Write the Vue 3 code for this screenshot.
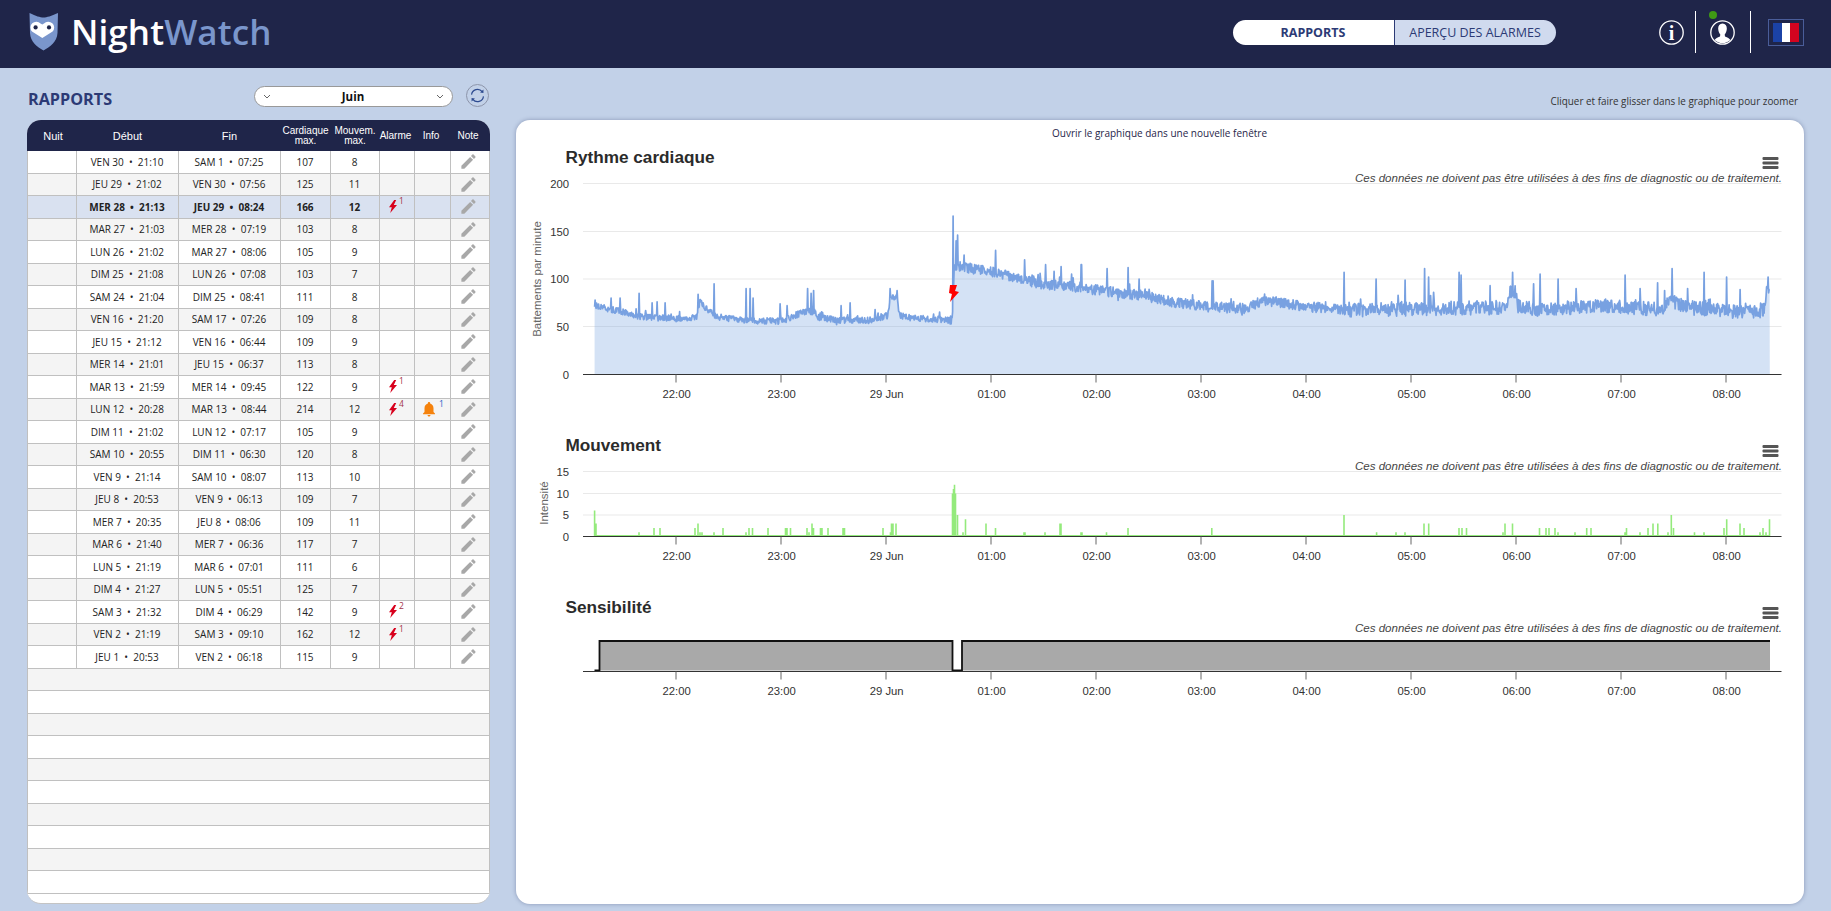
<template>
  <div class="page">
    <header class="topbar">
      <div class="logo">
        <svg class="owl" viewBox="0 0 30 38" width="30" height="38">
          <path d="M0.5 0C7 3 11 4.5 14.5 4.5S22 3 29 0L28.5 20C28 29 21 34 14.5 37.5C8 34 1.5 29 1 20Z" fill="#7a96cc" />
          <path d="M13.3 25L3 18.5A5.8 5.8 0 1 1 11.5 10.5L13.3 11.5L15 10.5A5.8 5.8 0 1 1 23.6 18.5Z" fill="#fff" />
          <circle cx="6.6" cy="14.4" r="2.1" fill="#1f2549" />
          <circle cx="20" cy="14.4" r="2.1" fill="#1f2549" />
        </svg>
        <span class="logo-text">Night<span class="logo-accent">Watch</span></span>
      </div>

      <div class="tabs">
        <button class="tab tab-active">RAPPORTS</button>
        <button class="tab">APERÇU DES ALARMES</button>
      </div>

      <svg class="info-icon" viewBox="0 0 25 25" width="25" height="25">
        <circle cx="12.5" cy="12.5" r="11.7" fill="none" stroke="#fff" stroke-width="1.3" />
        <text x="12.5" y="19.5" text-anchor="middle" class="info-letter">i</text>
      </svg>
      <span class="bar-divider"></span>
      <div class="user">
        <svg viewBox="0 0 25 25" width="25" height="25">
          <circle cx="12.5" cy="12.5" r="11.7" fill="none" stroke="#fff" stroke-width="1.3" />
          <path d="M12.5 3.5C9.4 3.5 8 6 8.2 9C8.4 11.5 9.3 13.5 10.3 14.6L10 16.5C7.5 17.7 5.5 18.3 4.6 20A11.5 11.5 0 0 0 20.4 20C19.5 18.3 17.5 17.7 15 16.5L14.7 14.6C15.7 13.5 16.6 11.5 16.8 9C17 6 15.6 3.5 12.5 3.5Z" fill="#fff" />
        </svg>
        <span class="status-dot"></span>
      </div>
      <span class="bar-divider"></span>
      <div class="flag-box">
        <span class="flag-blue"></span><span class="flag-white"></span><span class="flag-red"></span>
      </div>
    </header>

    <main class="content">
      <section class="reports">
        <div class="reports-head">
          <h2>RAPPORTS</h2>
          <div class="month-select">
            <svg class="chevron" viewBox="0 0 8 5" width="8" height="5"><path d="M1 1l3 3 3-3" /></svg>
            <span>Juin</span>
            <svg class="chevron" viewBox="0 0 8 5" width="8" height="5"><path d="M1 1l3 3 3-3" /></svg>
          </div>
          <button class="refresh">
            <svg viewBox="0 0 20 20" width="17" height="17">
              <path d="M3 9A7 7 0 0 1 15.5 5.5" />
              <path d="M17 11A7 7 0 0 1 4.5 14.5" />
              <path class="arrow" d="M13 6.5L17 7L17 2.8Z" />
              <path class="arrow" d="M7 13.5L3 13L3 17.2Z" />
            </svg>
          </button>
        </div>

        <div class="table">
          <div class="table-row table-head">
            <div class="big">Nuit</div>
            <div class="big">Début</div>
            <div class="big">Fin</div>
            <div>Cardiaque<br />max.</div>
            <div>Mouvem.<br />max.</div>
            <div class="nudge">Alarme</div>
            <div class="nudge">Info</div>
            <div>Note</div>
          </div>
          <div
            v-for="(row, i) in rows"
            :key="row.start"
            class="table-row"
            :class="{ odd: i % 2 === 1, selected: row.selected }"
          >
            <div></div>
            <div>{{ row.start }}</div>
            <div>{{ row.end }}</div>
            <div>{{ row.heart }}</div>
            <div>{{ row.move }}</div>
            <div>
              <template v-if="row.alarm">
                <svg class="bolt" viewBox="0 0 10 16" width="8" height="13">
                  <polygon points="6.5,0 0,9 3.5,9 1.5,16 10,6 6,6 9,0" />
                </svg>
                <sup class="sup-red">{{ row.alarm }}</sup>
              </template>
            </div>
            <div>
              <template v-if="row.info">
                <svg class="bell" viewBox="0 0 24 24" width="18" height="18">
                  <path d="M12 22c1.1 0 2-.9 2-2h-4c0 1.1.9 2 2 2zm6-6v-5c0-3.07-1.63-5.64-4.5-6.32V4c0-.83-.67-1.5-1.5-1.5s-1.5.67-1.5 1.5v.68C7.63 5.36 6 7.92 6 11v5l-2 2v1h16v-1l-2-2z" />
                </svg>
                <sup class="sup-blue">{{ row.info }}</sup>
              </template>
            </div>
            <div>
              <svg class="pencil" viewBox="0 0 24 24" width="19" height="19">
                <path d="M3 17.25V21h3.75L17.81 9.94l-3.75-3.75L3 17.25zM20.71 7.04c.39-.39.39-1.02 0-1.41l-2.34-2.34c-.39-.39-1.02-.39-1.41 0l-1.83 1.83 3.75 3.75 1.83-1.83z" />
              </svg>
            </div>
          </div>
          <div v-for="n in 10" :key="n" class="table-row empty" :class="{ odd: n % 2 === 1 }"></div>
        </div>
      </section>

      <section class="graphs">
        <p class="hint">Cliquer et faire glisser dans le graphique pour zoomer</p>
        <div class="panel">
          <a class="open-link">Ouvrir le graphique dans une nouvelle fenêtre</a>

          <svg
            v-for="chart in charts"
            :key="chart.title"
            class="chart"
            :class="chart.id"
            width="1286"
            :height="chart.height"
          >
            <text x="49.5" y="18" class="chart-title">{{ chart.title }}</text>
            <g class="burger">
              <rect x="1246.5" y="12" width="16" height="3" rx="1" />
              <rect x="1246.5" y="16.5" width="16" height="3" rx="1" />
              <rect x="1246.5" y="21" width="16" height="3" rx="1" />
            </g>

            <line v-for="g in chart.grid" :key="g.label" x1="67" x2="1265.5" :y1="g.y" :y2="g.y" class="grid" />
            <text v-for="g in chart.grid" :key="g.label" x="53" :y="g.y + 4" text-anchor="end" class="tick-label">{{ g.label }}</text>
            <text
              v-if="chart.yTitle"
              :x="chart.yTitle.x"
              :y="chart.yTitle.y"
              :transform="`rotate(-90 ${chart.yTitle.x} ${chart.yTitle.y})`"
              text-anchor="middle"
              class="y-title"
            >{{ chart.yTitle.text }}</text>

            <template v-if="chart.id === 'heart'">
              <path :d="heartArea" class="heart-area" />
              <path :d="heartLine" class="heart-line" />
              <polygon points="434,140 441,140 439,146 443,147 434,157 436,149 433,148" class="chart-bolt" />
            </template>
            <template v-else-if="chart.id === 'move'">
              <path :d="moveBars" class="move-bars" />
              <line x1="78.5" x2="1254" :y1="chart.axis - 0.8" :y2="chart.axis - 0.8" class="move-base" />
            </template>
            <template v-else>
              <path d="M83.5 46H436.5V75.5H83.5ZM446 46H1254V75.5H446Z" class="sens-fill" />
              <path d="M78.5 75.5H83.5V46H436.5V75.5H446V46H1254" class="sens-line" />
            </template>

            <text x="1266" y="37" text-anchor="end" class="disclaimer">Ces données ne doivent pas être utilisées à des fins de diagnostic ou de traitement.</text>

            <line x1="67" x2="1265.5" :y1="chart.axis" :y2="chart.axis" class="axis" />
            <g v-for="t in ticks" :key="t.label">
              <line :x1="t.x" :x2="t.x" :y1="chart.axis" :y2="chart.axis + 8" class="tick" />
              <text :x="t.x + 0.7" :y="chart.axis + 23.5" text-anchor="middle" class="tick-label">{{ t.label }}</text>
            </g>
          </svg>
        </div>
      </section>
    </main>
  </div>
</template>

<script setup>
import { computed } from 'vue'

const night = (day, time) => `${day} \u00a0•\u00a0 ${time}`

const rows = [
  ['VEN 30', '21:10', 'SAM 1', '07:25', 107, 8],
  ['JEU 29', '21:02', 'VEN 30', '07:56', 125, 11],
  ['MER 28', '21:13', 'JEU 29', '08:24', 166, 12, 1, 0, true],
  ['MAR 27', '21:03', 'MER 28', '07:19', 103, 8],
  ['LUN 26', '21:02', 'MAR 27', '08:06', 105, 9],
  ['DIM 25', '21:08', 'LUN 26', '07:08', 103, 7],
  ['SAM 24', '21:04', 'DIM 25', '08:41', 111, 8],
  ['VEN 16', '21:20', 'SAM 17', '07:26', 109, 8],
  ['JEU 15', '21:12', 'VEN 16', '06:44', 109, 9],
  ['MER 14', '21:01', 'JEU 15', '06:37', 113, 8],
  ['MAR 13', '21:59', 'MER 14', '09:45', 122, 9, 1],
  ['LUN 12', '20:28', 'MAR 13', '08:44', 214, 12, 4, 1],
  ['DIM 11', '21:02', 'LUN 12', '07:17', 105, 9],
  ['SAM 10', '20:55', 'DIM 11', '06:30', 120, 8],
  ['VEN 9', '21:14', 'SAM 10', '08:07', 113, 10],
  ['JEU 8', '20:53', 'VEN 9', '06:13', 109, 7],
  ['MER 7', '20:35', 'JEU 8', '08:06', 109, 11],
  ['MAR 6', '21:40', 'MER 7', '06:36', 117, 7],
  ['LUN 5', '21:19', 'MAR 6', '07:01', 111, 6],
  ['DIM 4', '21:27', 'LUN 5', '05:51', 125, 7],
  ['SAM 3', '21:32', 'DIM 4', '06:29', 142, 9, 2],
  ['VEN 2', '21:19', 'SAM 3', '09:10', 162, 12, 1],
  ['JEU 1', '20:53', 'VEN 2', '06:18', 115, 9]
].map(r => ({
  start: night(r[0], r[1]),
  end: night(r[2], r[3]),
  heart: r[4],
  move: r[5],
  alarm: r[6],
  info: r[7],
  selected: r[8]
}))

// x positions are page px minus the panel's left edge (516)
const ticks = ['22:00', '23:00', '29 Jun', '01:00', '02:00', '03:00', '04:00', '05:00', '06:00', '07:00', '08:00']
  .map((label, i) => ({ label, x: 160 + i * 105 }))

const charts = [
  {
    id: 'heart',
    title: 'Rythme cardiaque',
    height: 265,
    axis: 229.5,
    grid: [
      { label: '200', y: 38.5 },
      { label: '150', y: 86.5 },
      { label: '100', y: 134 },
      { label: '50', y: 181.5 },
      { label: '0', y: 229.5 }
    ],
    yTitle: { x: 25, y: 134, text: 'Battements par minute' }
  },
  {
    id: 'move',
    title: 'Mouvement',
    height: 135,
    axis: 103.5,
    grid: [
      { label: '15', y: 38.5 },
      { label: '10', y: 60.5 },
      { label: '5', y: 82 },
      { label: '0', y: 103.5 }
    ],
    yTitle: { x: 31.5, y: 70, text: 'Intensité' }
  },
  { id: 'sens', title: 'Sensibilité', height: 110, axis: 76.5, grid: [] }
]

const mulberry = seed => () => {
  seed = (seed + 0x6d2b79f5) | 0
  let t = Math.imul(seed ^ (seed >>> 15), 1 | seed)
  t = (t + Math.imul(t ^ (t >>> 7), 61 | t)) ^ t
  return ((t ^ (t >>> 14)) >>> 0) / 4294967296
}

// [page x, bpm] baseline of the night
const heartBase = [
  [595, 72], [620, 66], [640, 61], [660, 59], [690, 58], [697, 61], [700, 76], [705, 70], [712, 64], [718, 60],
  [745, 57], [770, 56], [782, 56], [795, 62], [805, 66], [815, 66], [818, 60], [840, 57], [870, 57], [888, 62],
  [890, 80], [897, 80], [899, 63], [905, 60], [950, 57], [952.5, 57], [954, 112], [960, 113], [990, 107.5],
  [1006, 104], [1040, 95], [1073, 92], [1107, 87], [1140, 83], [1173, 76], [1207, 71], [1247, 69], [1263, 78],
  [1307, 71], [1357, 67], [1420, 69], [1500, 70], [1506, 72], [1509, 86], [1515, 86], [1518, 72], [1540, 68],
  [1600, 72], [1660, 68], [1672, 76], [1690, 70], [1730, 66], [1763, 66], [1767, 90], [1770, 88]
]

const heartSpikes = [
  [595, 78], [611, 80], [620, 80], [639, 85], [652, 75], [657, 76], [665, 75], [698, 84], [714, 95], [746, 90], [750, 90], [753, 80],
  [780, 74], [787, 72], [807.5, 90], [811, 85], [813.6, 88], [841, 72], [850, 75], [875, 68], [890, 90], [897, 88],
  [953, 166], [956, 140], [957.5, 146], [964, 125], [995.7, 130], [1024.7, 120], [1045.7, 115], [1054, 108],
  [1061, 113], [1071.7, 105], [1081.3, 115], [1107, 111], [1128, 112], [1139, 100], [1212, 98], [1213, 98], [1344, 107],
  [1376, 100], [1405, 99], [1424.6, 111], [1428.5, 102], [1459, 107], [1461, 104], [1490, 93], [1512.6, 107],
  [1533.7, 95], [1540, 105], [1558, 100], [1576, 90], [1625, 104], [1640, 90], [1657.5, 96], [1672, 111],
  [1687.5, 90], [1704, 107], [1726.5, 102], [1740, 89], [1768, 102]
]

const baseAt = x => {
  for (let i = 1; i < heartBase.length; i++) {
    if (x <= heartBase[i][0]) {
      const [x0, v0] = heartBase[i - 1]
      const [x1, v1] = heartBase[i]
      return v0 + ((v1 - v0) * (x - x0)) / (x1 - x0)
    }
  }
  return heartBase[heartBase.length - 1][1]
}

const heartPoints = computed(() => {
  const rand = mulberry(2906)
  const pts = []
  for (let x = 594.6; x <= 1769.8; x += 0.5) {
    const amp = x < 950 ? 3.4 : x < 1350 ? 5.4 : 7.4
    let v = baseAt(x) + (rand() - 0.5) * 2 * amp
    if (rand() < 0.05) v += (rand() - 0.3) * amp * 2.4
    for (const [sx, top] of heartSpikes) {
      if (Math.abs(x - sx) < 0.3) v = top
    }
    pts.push([x - 516, 229.5 - v * 0.955])
  }
  return pts
})

const heartLine = computed(() => 'M' + heartPoints.value.map(p => `${p[0].toFixed(1)} ${p[1].toFixed(1)}`).join('L'))
const heartArea = computed(() => `${heartLine.value}L1253.8 229.5L78.6 229.5Z`)

// [page x, intensity]
const moveData = [
  [594.6, 6], [596, 3], [639, 1], [654, 2], [660, 2], [695, 2], [698, 3], [700, 1], [702, 1], [714, 1], [723, 2],
  [746, 1], [749, 2], [752.5, 2], [768, 2], [785.5, 2], [787, 2], [790.5, 2], [807, 2], [809, 1], [812, 3], [813.5, 2],
  [820.5, 2], [822, 2], [828, 2], [843, 2], [844.5, 2], [883, 2], [890.5, 1], [891.5, 3], [893, 3], [896, 3], [952.5, 10],
  [953.5, 11], [954.5, 12], [955.5, 10], [957.5, 5], [963, 1], [965.5, 4], [986, 3], [995.5, 2], [1024, 1], [1025, 1],
  [1045, 1], [1061, 3],
  [1060, 3], [1081, 1], [1082, 1], [1106.5, 1], [1128, 2], [1211.8, 2], [1344, 5], [1376.6, 1], [1396, 1], [1405, 1],
  [1424, 3], [1428.7, 3], [1459, 2], [1462, 2], [1466.5, 2], [1503, 1], [1505, 3], [1512.5, 3], [1539.5, 2], [1546, 2],
  [1549, 2], [1555, 2], [1558, 1], [1575, 1], [1586.7, 2], [1591, 2], [1625, 1], [1626.5, 2], [1640, 1], [1648, 2],
  [1653, 3], [1657.8, 3], [1668, 1], [1671.3, 5], [1673.5, 2], [1694.5, 1], [1704, 1], [1724, 2], [1726.7, 4],
  [1740, 3], [1744, 2], [1760, 1], [1763, 2], [1766, 1], [1769.5, 4]
]

const moveBars = computed(() =>
  moveData
    .map(([x, v]) => `M${(x - 516 - 0.8).toFixed(1)} 103.5v${(-v * 4.31).toFixed(1)}h1.6v${(v * 4.31).toFixed(1)}z`)
    .join('')
)
</script>

<style>
html,
body {
  margin: 0;
  overflow: hidden;
}
</style>

<style scoped>
.page {
  height: 911px;
  display: flex;
  flex-direction: column;
  background: #c2d1e8;
  font-family: "Open Sans", "Liberation Sans", sans-serif;
  overflow: hidden;
}

.topbar {
  flex: none;
  height: 68px;
  display: flex;
  align-items: center;
  padding: 0 27px 4px 29px;
  box-sizing: border-box;
  background: #1f2549;
  color: #fff;
}

.logo {
  display: flex;
  align-items: center;
  gap: 12px;
}

.logo-text {
  font-family: "Open Sans", sans-serif;
  font-size: 35px;
  font-weight: 600;
  letter-spacing: 0.1px;
  line-height: 40px;
}

.logo-accent {
  color: #7a96cc;
}

.tabs {
  display: flex;
  margin-left: auto;
  height: 25px;
}

.tab {
  width: 162px;
  border: 0;
  border-radius: 0 13px 13px 0;
  background: #d0daee;
  color: #2c3a75;
  font: 400 12.5px "Open Sans", sans-serif;
  padding: 0;
  border-left: 1px solid #2c3a75;
}

.tab-active {
  width: 161px;
  background: #fff;
  border-left: 0;
  border-radius: 13px 0 0 13px;
  font-weight: 700;
}

.info-icon {
  margin-left: 103px;
}

.info-letter {
  font: 700 20px "Liberation Serif", serif;
  fill: #fff;
}

.bar-divider {
  width: 1px;
  height: 42px;
  margin: 0 14px 0 11px;
  background: #fff;
}

.user {
  position: relative;
  display: flex;
  margin-right: 4px;
}

.status-dot {
  position: absolute;
  left: -1px;
  top: -9px;
  width: 8px;
  height: 8px;
  border-radius: 50%;
  background: #3f9a14;
}

.flag-box {
  width: 36px;
  height: 27px;
  margin-left: 3.5px;
  box-sizing: border-box;
  display: flex;
  padding: 3px 4px;
  border: 1px solid #4a5d99;
}

.flag-box span {
  flex: 1;
}

.flag-blue {
  background: #1b42a6;
}

.flag-white {
  background: #fff;
}

.flag-red {
  background: #d3041f;
}

.content {
  flex: 1;
  min-height: 0;
  display: flex;
  padding: 0 27px 7px 27px;
  gap: 26.5px;
}

.reports {
  width: 462.5px;
  flex: none;
  display: flex;
  flex-direction: column;
}

.reports-head {
  height: 52px;
  flex: none;
  display: flex;
  align-items: center;
  padding-top: 4px;
  box-sizing: border-box;
}

.reports-head h2 {
  margin: 6px 0 0 1px;
  color: #2c3a75;
  font-size: 16.2px;
  font-weight: 700;
}

.month-select {
  margin-left: auto;
  width: 199px;
  height: 21px;
  box-sizing: border-box;
  display: flex;
  align-items: center;
  justify-content: space-between;
  padding: 0 8px;
  background: #fff;
  border: 1px solid #999;
  border-radius: 11px;
  font-size: 11.5px;
  font-weight: 700;
  color: #111;
}

.chevron {
  fill: none;
  stroke: #666;
  stroke-width: 1;
}

.refresh {
  width: 23px;
  height: 23px;
  margin: -1px 1px 0 13px;
  padding: 0;
  display: flex;
  align-items: center;
  justify-content: center;
  border: 1px solid #8d95aa;
  border-radius: 50%;
  background: transparent;
}

.refresh path {
  fill: none;
  stroke: #2c4a8f;
  stroke-width: 1.4;
}

.refresh path.arrow {
  fill: #2c4a8f;
  stroke: none;
}

.table {
  flex: 1;
  min-height: 0;
  overflow: hidden;
  background: #fff;
  border-radius: 14px;
  border-bottom: 1px solid #c4c4c4;
  box-sizing: border-box;
}

.table-row {
  display: grid;
  grid-template-columns: 49px 102px 102px 50px 49px 35px 36px 39px;
  height: 22.5px;
  box-sizing: border-box;
  background: #fff;
  border-bottom: 1px solid #c0c0c0;
  border-left: 1px solid #c0c0c0;
  border-right: 1px solid #c0c0c0;
  color: #222;
  font-size: 10px;
}

.table-row.odd {
  background: #f4f4f4;
}

.table-row.selected {
  background: #d9e1f0;
  font-weight: 700;
}

.table-row > div {
  display: flex;
  align-items: center;
  justify-content: center;
  border-right: 1px solid #c0c0c0;
  margin-left: -1px;
  white-space: nowrap;
}

.table-row > div:last-child {
  border-right: 0;
  padding-right: 4px;
}

.table-head {
  height: 31px;
  padding-left: 1px;
  background: #1f2549;
  border: 0;
  color: #fff;
  font: 10px/10px "Liberation Sans", sans-serif;
  text-align: center;
}

.table-head > div {
  border: 0;
}

.table-head > div:first-child {
  padding-left: 2px;
}

.table-head .nudge {
  padding-right: 3px;
}

.table-head .big {
  font-size: 11px;
}

.bolt {
  fill: #d8001c;
}

.bell {
  fill: #f5820d;
  margin-right: -1px;
}

.pencil {
  fill: #a8a8a8;
}

.table-row sup {
  font-size: 8.5px;
  font-weight: 400;
  line-height: 1;
  margin: -11px 0 0 2px;
}

.sup-red {
  color: #a33347;
}

.sup-blue {
  color: #2a62c8;
}

.graphs {
  flex: 1;
  min-width: 0;
  display: flex;
  flex-direction: column;
}

.hint {
  height: 52px;
  flex: none;
  margin: 0;
  padding: 26px 6px 0 0;
  box-sizing: border-box;
  text-align: right;
  color: #333;
  font-size: 9.9px;
  line-height: 14px;
}

.panel {
  flex: 1;
  min-height: 0;
  padding-top: 6px;
  background: #fff;
  border-radius: 14px;
  box-shadow: 0 0 4px rgba(30, 40, 90, 0.35);
}

.open-link {
  display: block;
  height: 14px;
  margin-bottom: 5px;
  padding-right: 1px;
  text-align: center;
  color: #1f2549;
  font-size: 10px;
  line-height: 14px;
}

.chart {
  display: block;
  font-family: "Liberation Sans", sans-serif;
}

.chart.heart {
  margin-bottom: 23px;
}

.chart.move {
  margin-bottom: 27px;
}

.chart-title {
  font-size: 17.2px;
  font-weight: 700;
  fill: #2b2b2b;
}

.burger rect {
  fill: #555;
}

.grid {
  stroke: #e9e9e9;
  stroke-width: 1.2;
}

.tick-label {
  font-size: 11.3px;
  fill: #333;
}

.y-title {
  font-size: 11.5px;
  fill: #666;
}

.heart-area {
  fill: rgba(120, 165, 225, 0.32);
}

.heart-line {
  fill: none;
  stroke: #78a1e1;
  stroke-width: 1.7;
  stroke-linejoin: round;
}

.chart-bolt {
  fill: #f00;
}

.move-bars {
  fill: #94ea7c;
}

.move-base {
  stroke: #94ea7c;
  stroke-width: 1.5;
}

.sens-fill {
  fill: #a9a9a9;
}

.sens-line {
  fill: none;
  stroke: #111;
  stroke-width: 1.8;
}

.disclaimer {
  font-size: 11.52px;
  font-style: italic;
  fill: #444;
}

.axis {
  stroke: #333;
  stroke-width: 1.1;
}

.tick {
  stroke: #666;
  stroke-width: 1;
}
</style>
